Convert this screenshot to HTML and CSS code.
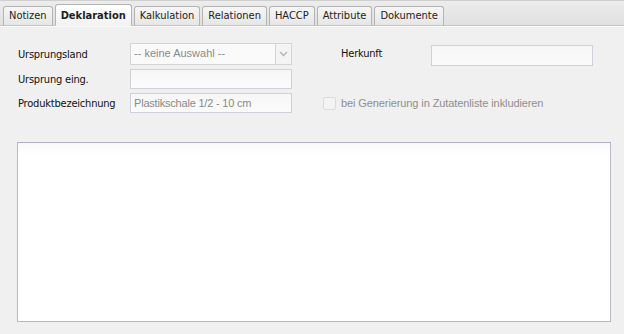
FILE: index.html
```html
<!DOCTYPE html>
<html lang="de">
<head>
    <meta charset="UTF-8">
    <link rel="stylesheet" href="styles.css">
    <title>Deklaration</title>
</head>
<body>

    <div class="tabs">
        <div class="tab">Notizen</div>
        <div class="tab active">Deklaration</div>
        <div class="tab">Kalkulation</div>
        <div class="tab">Relationen</div>
        <div class="tab">HACCP</div>
        <div class="tab">Attribute</div>
        <div class="tab">Dokumente</div>
    </div>

    <div class="panel">
        <div class="form">
            <label class="label">Ursprungsland</label>
            <div class="select">
                <span class="select-text">-- keine Auswahl --</span>
                <span class="select-btn">
                    <svg width="9" height="6" viewBox="0 0 9 6"><path d="M1 1 L4.5 4.5 L8 1" fill="none" stroke="#b4b4b4" stroke-width="1.4"/></svg>
                </span>
            </div>
            <label class="label label-right">Herkunft</label>
            <div class="field field-herkunft"></div>

            <label class="label">Ursprung eing.</label>
            <div class="field"></div>
            <div></div>
            <div></div>

            <label class="label">Produktbezeichnung</label>
            <div class="field disabled">Plastikschale 1/2 - 10 cm</div>
            <div class="check-row">
                <span class="checkbox"></span>
                <span class="check-text">bei Generierung in Zutatenliste inkludieren</span>
            </div>
        </div>

        <div class="textarea"></div>
    </div>

</body>
</html>
```

FILE: styles.css
```css
body {
    margin: 0;
    background-color: #f0f0f0;
    font-family: "DejaVu Sans", sans-serif;
    font-stretch: condensed;
    font-size: 11px;
    color: #111;
    width: 624px;
    height: 334px;
    overflow: hidden;
}

.tabs {
    display: flex;
    align-items: flex-end;
    gap: 2px;
    height: 24px;
    padding-left: 3px;
    border-top: 1px solid #cfcfcf;
    border-bottom: 1px solid #c6c6c6;
    background: linear-gradient(#ececec, #e0e0e0);
    box-shadow: 0 1px 0 #fafafa;
}

.tab {
    height: 18px;
    line-height: 18px;
    padding: 0 5px;
    margin-bottom: -1px;
    border: 1px solid #b4b4b4;
    border-bottom: 1px solid #c6c6c6;
    border-radius: 3px 3px 0 0;
    background: linear-gradient(#f6f6f6, #e6e6e6);
    color: #222;
}

.tab.active {
    height: 20px;
    line-height: 21px;
    padding: 0 5px;
    font-weight: bold;
    background: linear-gradient(#ffffff, #f2f2f2);
    border-bottom-color: #f2f2f2;
}

.panel {
    padding: 17px 13px 0 17px;
}

.form {
    display: grid;
    grid-template-columns: 112px 162px 101px 162px;
    grid-template-rows: 22px 20px 20px;
    row-gap: 4px;
    margin-left: 1px;
}

.label {
    align-self: center;
    color: #111;
    letter-spacing: -0.2px;
}

.label-right {
    padding-left: 49px;
    margin-top: -2px;
}

.select {
    display: flex;
    height: 22px;
}

.select-text {
    flex: 1;
    border: 1px solid #d4d4d4;
    background-color: #fafafa;
    color: #8a8a8a;
    padding-left: 3px;
    line-height: 19px;
    font-family: "Liberation Sans", sans-serif;
    font-stretch: normal;
    font-size: 11px;
}

.select-btn {
    width: 15px;
    border: 1px solid #d4d4d4;
    border-left: none;
    background-color: #f4f4f4;
    display: flex;
    align-items: center;
    justify-content: center;
}

.field {
    height: 20px;
    box-sizing: border-box;
    border: 1px solid #d0d0d8;
    background: linear-gradient(#f6f6f6, #fbfbfb);
}

.field-herkunft {
    margin-left: 38px;
    height: 21px;
    margin-top: 2px;
    width: 162px;
}

.field.disabled {
    color: #8a8a8a;
    padding-left: 3px;
    line-height: 18px;
    font-family: "Liberation Sans", sans-serif;
    font-stretch: normal;
    font-size: 11px;
    letter-spacing: -0.2px;
}

.check-row {
    grid-column: 3 / 5;
    display: flex;
    align-items: center;
    gap: 5px;
    padding-left: 31px;
    white-space: nowrap;
}

.checkbox {
    flex-shrink: 0;
    width: 11px;
    height: 11px;
    border: 1px solid #dcdcdc;
    border-radius: 2px;
    background-color: #f4f4f4;
}

.check-text {
    color: #8f8f8f;
    font-family: "Liberation Sans", sans-serif;
    font-stretch: normal;
    font-size: 11px;
    letter-spacing: -0.1px;
}

.textarea {
    margin-top: 29px;
    width: 594px;
    height: 180px;
    box-sizing: border-box;
    border: 1px solid #b8b8cc;
    border-top-color: #b0b0c8;
    background: linear-gradient(#f8faf8, #ffffff 12px);
}
```
